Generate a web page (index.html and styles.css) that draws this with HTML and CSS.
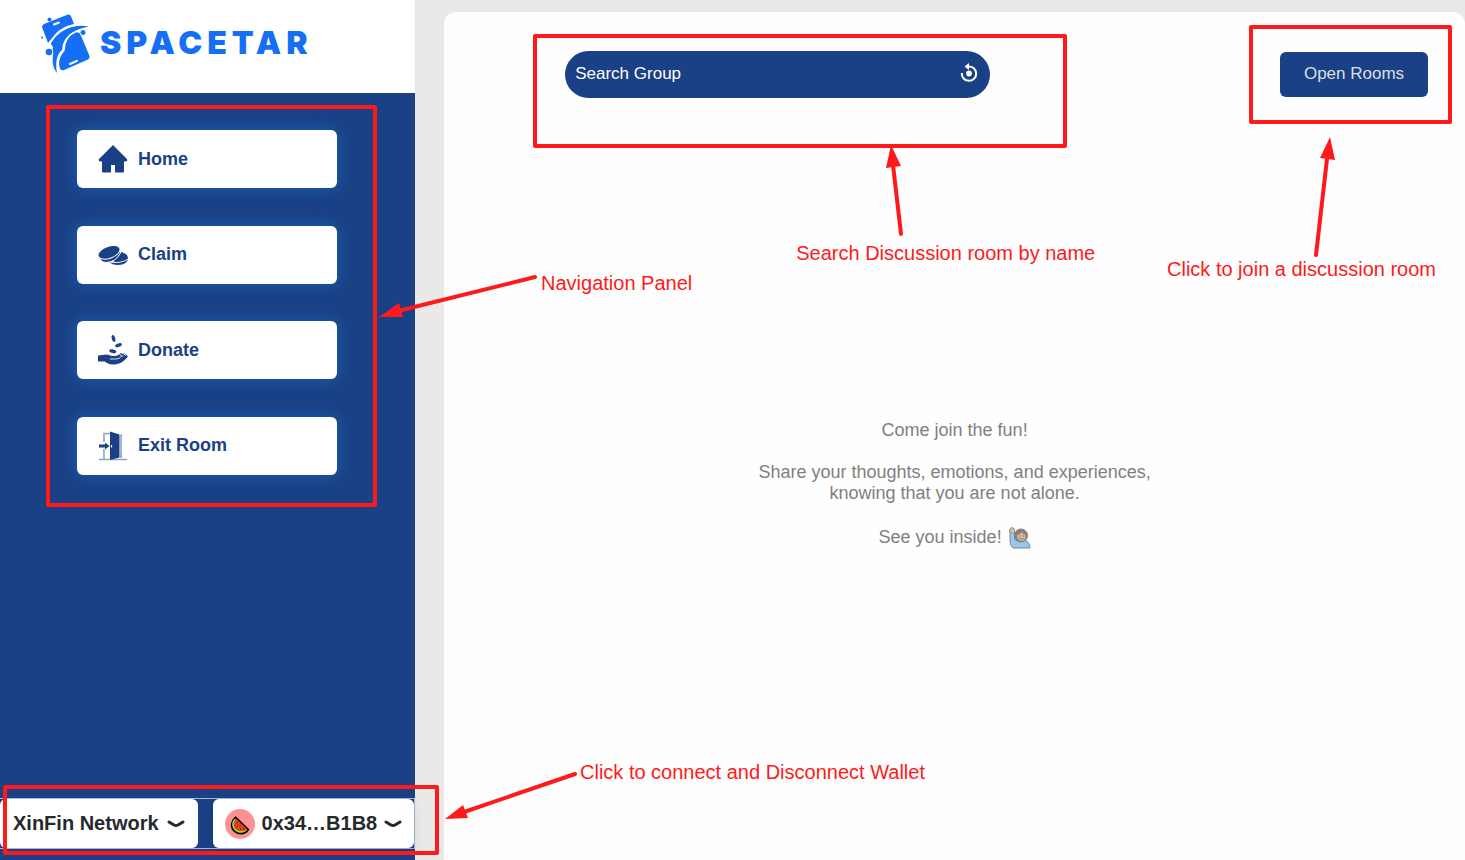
FILE: index.html
```html
<!DOCTYPE html>
<html lang="en">
<head>
<meta charset="utf-8">
<title>Spacetar</title>
<link rel="stylesheet" href="styles.css">
</head>
<body>
<div class="app">
  <aside class="sidebar">
    <a class="brand" href="#">
      <svg class="brand-mark" viewBox="0 0 52 62" aria-hidden="true">
        <g fill="#156ff5">
          <path d="M2 15Q2 13 4 12L28 2.600Q30 2 31 4L34 12C24 14 17 19 13 25L8 31Z"/>
          <path d="M35 20L40 21L49.500 44Q50 46 48 47.500L23 58.500Q20 58 19.500 55C18 47 21 43 24.500 39C25 29 29 24 35 20Z"/>
          <path d="M49 14.500C34 12 23 17 16 24C14 27 11 28 11 32L13 35C12 38 14 40 13 43C12 50 13 56 17 61C15 50 17 42 22 38C23 36 22 33 23.500 31C28 22 37 16.500 49 14.500Z"/>
          <circle cx="9" cy="40" r="3.300"/><circle cx="9.500" cy="7.500" r="2"/><circle cx="2" cy="25.500" r="1"/>
        </g>
        <g fill="none" stroke="#fff" stroke-linecap="round">
          <path d="M42 17.500C31 20 26 26 24.300 32Q25 37 22 40C17.500 45 17.500 51 18.500 58" stroke-width="1.600"/>
          <path d="M36 13C25 15 16 21 10 31" stroke-width="1.500"/>
          <path d="M14 12.500L19 10.500M30 52L37 48.800" stroke-width="2"/>
          <path d="M31 3L34.500 11M42 24L50 43" stroke-width="1" stroke-dasharray="1 2"/>
        </g>
        <circle cx="43" cy="20.500" r="3" fill="#156ff5" stroke="#fff"/>
      </svg>
      <span class="brand-name">SPACETAR</span>
    </a>

    <nav class="nav">
      <a class="nav-item" href="#">
        <svg class="icon" viewBox="0 0 30 30" aria-hidden="true"><path fill="currentColor" d="M15 1L29 15Q30 17.500 27 17.500H26V27.500Q26 28.500 25 28.500H17V21H13V28.500H5Q4 28.500 4 27.500V17.500H3Q0 17.500 1 15Z"/></svg>
        Home
      </a>
      <a class="nav-item" href="#">
        <svg class="icon" viewBox="0 0 30 30" aria-hidden="true">
          <g fill="currentColor"><ellipse cx="20.500" cy="17" rx="9.500" ry="5.500" transform="rotate(8 20.500 17)"/><path d="M11 21.500Q21 24 30 18Q30 24.500 20 25Q14 25 11 21.500Z"/></g>
          <path d="M13 22.300Q24 23.500 30 19" fill="none" stroke="#fff" stroke-width=".9"/>
          <path fill="currentColor" stroke="#fff" d="M.500 15Q2 22.500 8 22.500Q18 22 22.500 13V8Z"/>
          <ellipse cx="11" cy="12.300" rx="11.500" ry="6" transform="rotate(-20 11 12.300)" fill="currentColor" stroke="#fff"/>
        </svg>
        Claim
      </a>
      <a class="nav-item" href="#">
        <svg class="icon" viewBox="0 0 30 30" aria-hidden="true">
          <g fill="currentColor"><ellipse cx="15.500" cy="3.500" rx="1.700" ry="3.500" transform="rotate(-15 15.500 3.500)"/><ellipse cx="20.500" cy="10.200" rx="3.500" ry="1.700" transform="rotate(-22 20.500 10.200)"/><ellipse cx="14.800" cy="16.200" rx="3.600" ry="1.800" transform="rotate(12 14.800 16.200)"/>
          <path d="M0 20.500L9 19.500L14 21L19 20.800L22 18.500L25 18L28 19.500L30 21.500Q25 28 19 29Q14 30.500 9 28L7 26.500H0Z"/></g>
          <path d="M12 24H18Q22 24 24 20.500M21 19L25 21.500M24 18L28 20.500" fill="none" stroke="#fff" stroke-width=".8"/>
        </svg>
        Donate
      </a>
      <a class="nav-item" href="#">
        <svg class="icon" viewBox="0 0 30 30" aria-hidden="true">
          <path d="M6 11V2.500H12M6 18V28M23 4V27M1 28.500H29" fill="none" stroke="#8ea3c8" stroke-width="1.600"/>
          <path d="M22 4H24.500M22 25H24.500" stroke="#8ea3c8"/>
          <path fill="currentColor" d="M12 .500L21.500 3.500V26.500L12 29ZM1 13.500H7V11.500L11.500 15L7 18.500V16.500H1Z"/>
          <path d="M13.500 14V16.500" stroke="#fff" stroke-width="1.200"/>
        </svg>
        Exit Room
      </a>
      <div class="frame frame-nav"></div>
      <div class="note note-nav">
        <svg class="arrow-nav" viewBox="0 0 160 46" aria-hidden="true"><path class="shaft" d="M157 3L20 37"/><path class="head" d="M1 43L21 29L25 43Z"/></svg>
        <span>Navigation Panel</span>
      </div>
    </nav>

    <div class="wallet">
      <button class="wallet-btn network" type="button">XinFin Network
        <svg class="chevron" viewBox="0 0 18 10" aria-hidden="true"><path d="M2 3L7 6Q9 7.200 11 6L16 3"/></svg>
      </button>
      <button class="wallet-btn account" type="button">
        <svg class="avatar" viewBox="0 0 30 30" aria-hidden="true">
          <circle cx="15" cy="15" r="15" fill="#ff9195"/>
          <path d="M10.500 8L23.500 20.500C20 26 13 26 9 22C5 18 6 12 10.500 8Z" fill="#2f7d1c" stroke="#0a0d06" stroke-width="1.400" stroke-linejoin="round"/>
          <path d="M9.700 10.500C7.500 14 7.500 18 10.500 20.800C13.500 23.500 18 23.500 21.200 21" fill="none" stroke="#b4d832" stroke-width="1.500"/>
          <path d="M10.800 9.800L21.800 20.400C18 22.700 14 22.500 11.300 19.800C8.600 17 8.800 13 10.800 9.800Z" fill="#f23c1d"/>
          <path d="M12 13v1.200M15 16v1.200M12 17v1.200M15.500 19.500v1.200M18.500 19v1.200" stroke="#5c120c" stroke-width="1"/>
        </svg>
        0x34…B1B8
        <svg class="chevron" viewBox="0 0 18 10" aria-hidden="true"><path d="M2 3L7 6Q9 7.200 11 6L16 3"/></svg>
      </button>
      <div class="frame frame-wallet"></div>
      <div class="note note-wallet">
        <svg class="arrow-wallet" viewBox="0 0 134 50" aria-hidden="true"><path class="shaft" d="M131 3L20 41"/><path class="head" d="M1 48L19 34L24 47Z"/></svg>
        <span>Click to connect and Disconnect Wallet</span>
      </div>
    </div>
  </aside>

  <main class="main">
    <header class="toolbar">
      <form class="search">
        <input class="search-input" type="text" placeholder="Search Group" aria-label="Search Group">
        <button class="search-reset" type="button" aria-label="Reset search">
          <svg viewBox="0 0 20 20" aria-hidden="true"><path d="M9 3.500A7.200 7.200 0 1 1 2.800 10" fill="none" stroke="#fff" stroke-width="2"/><path d="M10 0V7L5.500 3.500Z" fill="#fff"/><circle cx="10" cy="10.500" r="2.900" fill="#fff"/></svg>
        </button>
        <div class="frame frame-search"></div>
        <div class="note note-search">
          <svg class="arrow-search" viewBox="0 0 20 92" aria-hidden="true"><path class="shaft" d="M15 89L7 20"/><path class="head" d="M5 0L15 21L0 23Z"/></svg>
          <span>Search Discussion room by name</span>
        </div>
      </form>
      <div class="rooms">
        <button class="rooms-btn" type="button">Open Rooms</button>
        <div class="frame frame-rooms"></div>
        <div class="note note-rooms">
          <svg class="arrow-rooms" viewBox="0 0 24 120" aria-hidden="true"><path class="shaft" d="M5 118L16 22"/><path class="head" d="M19 0L24 23L9 21Z"/></svg>
          <span>Click to join a discussion room</span>
        </div>
      </div>
    </header>
    <section class="welcome">
      <p>Come join the fun!</p>
      <p>Share your thoughts, emotions, and experiences,<br>knowing that you are not alone.</p>
      <p class="farewell">See you inside!
        <svg class="wave" viewBox="0 0 22 22" role="img" aria-label="Person raising hand">
          <path d="M1 6Q0 2 2 1Q5 0 5.500 3L6 13L14 13Q21 14 21 21H4Q1 19 1 12Z" fill="#96c8ed" stroke="#85868a"/>
          <path d="M1 6Q0 2 2 1Q5 0 5.500 3V6Z" fill="#d6bfa6" stroke="#96918b" stroke-width=".8"/>
          <circle cx="12" cy="8.500" r="6.500" fill="#8b7d7b" stroke="#817b7b"/>
          <path d="M8 8Q11 8 13 5Q14 7 16.500 8Q17 14 12.500 14Q8 14 8 8Z" fill="#d3b8a0"/>
          <path d="M10.300 8.500v1M14.300 8.500v1M10.500 11.500Q12.500 13 14.500 11.500" fill="none" stroke="#7d6964" stroke-width=".9"/>
        </svg>
      </p>
    </section>
  </main>
</div>
</body>
</html>
```
FILE: styles.css
```css
* {
  box-sizing: border-box;
}

body {
  margin: 0;
  background: #eae9e7;
  color: #1a4185;
  font-family: "Liberation Sans", Arial, sans-serif;
}

button,
input {
  border: 0;
  font: inherit;
}

p {
  margin: 0;
}

.app {
  display: flex;
  gap: 29px;
  min-height: 100vh;
  overflow: hidden;
}

.sidebar {
  display: flex;
  flex: 0 0 415px;
  flex-direction: column;
  background: #1a4185;
  z-index: 1;
}

.brand {
  display: flex;
  align-items: center;
  gap: 8px;
  padding: 12px 40px 19px;
  background: #fff;
  color: #156ff5;
  text-decoration: none;
}

.brand-mark {
  width: 52px;
  height: 62px;
}

.brand-name {
  font-family: Inter, sans-serif;
  font-size: 32px;
  font-weight: 900;
  letter-spacing: 5px;
  line-height: 40px;
}

.nav {
  position: relative;
  display: flex;
  flex-direction: column;
  justify-content: space-between;
  min-height: 414px;
  padding: 37px 78px 32px 77px;
}

.nav-item {
  display: flex;
  align-items: center;
  gap: 10px;
  height: 58px;
  padding: 0 21px;
  border-radius: 6px;
  background: #fff;
  box-shadow: 0 0 16px #1e62b4;
  color: #1a4185;
  font-size: 18px;
  font-weight: 700;
  text-decoration: none;
}

.icon {
  width: 30px;
  height: 30px;
}

.wallet {
  position: relative;
  display: flex;
  gap: 15px;
  margin: auto 0 11px;
  border: 1px solid #a9b8d3;
  border-left: 0;
}

.wallet-btn {
  display: flex;
  align-items: center;
  height: 49px;
  border-radius: 6px;
  background: #fff;
  color: #25292e;
  font-size: 20px;
  font-weight: 700;
  white-space: nowrap;
}

.network {
  flex: 0 0 197px;
  gap: 8px;
  padding: 0 13px;
}

.account {
  flex: 1;
  gap: 7px;
  padding: 0 12px;
  box-shadow: 0 4px 12px rgba(0, 0, 0, 0.1);
}

.avatar {
  width: 30px;
  height: 30px;
}

.chevron {
  width: 18px;
  height: 10px;
  fill: none;
  stroke: #25292e;
  stroke-width: 3;
  stroke-linecap: round;
}

.main {
  display: flex;
  flex: 1;
  flex-direction: column;
  min-width: 0;
  margin-top: 12px;
  border-radius: 12px 12px 0 0;
  background: #fefefe;
}

.toolbar {
  display: flex;
  justify-content: space-between;
  align-items: center;
  gap: 40px;
  padding: 39px 37px 12px 121px;
}

.search {
  position: relative;
  display: flex;
  align-items: center;
  flex: 0 1 425px;
  height: 47px;
  padding: 0 11px 0 10px;
  border-radius: 24px;
  background: #1a4185;
}

.search-input {
  flex: 1;
  min-width: 0;
  padding: 0 0 2px;
  outline: 0;
  background: transparent;
  color: #fff;
  font-size: 17px;
}

.search-input::placeholder {
  color: #fff;
  opacity: 1;
}

.search-reset {
  width: 20px;
  padding: 0 0 4px;
  background: transparent;
}

.search-reset svg {
  display: block;
  width: 20px;
  height: 20px;
}

.rooms {
  position: relative;
}

.rooms-btn {
  display: block;
  width: 148px;
  height: 45px;
  padding: 0 0 2px;
  border-radius: 6px;
  background: #1a4185;
  color: #dedfe2;
  font-size: 17px;
}

.welcome {
  display: flex;
  flex: 1;
  flex-direction: column;
  justify-content: center;
  gap: 21px;
  color: #808080;
  font-size: 18px;
  line-height: 21px;
  text-align: center;
}

.farewell {
  display: flex;
  align-items: center;
  justify-content: center;
  gap: 7px;
  height: 26px;
}

.wave {
  width: 22px;
  height: 22px;
}

/* Tutorial callouts drawn over the interface */
.frame {
  position: absolute;
  border: 4px solid #fe1a1a;
  border-radius: 2px;
  pointer-events: none;
}

.frame-nav {
  inset: 12px 38px 0 46px;
}

.frame-wallet {
  inset: -14px -25px -7px 3px;
}

.frame-search {
  inset: -17px -77px -50px -32px;
}

.frame-rooms {
  inset: -27px -24px -27px -31px;
}

.note {
  position: absolute;
  display: flex;
  align-items: flex-start;
  color: #fe1a1a;
  font-size: 20px;
  line-height: 24px;
  white-space: nowrap;
  pointer-events: none;
}

.note svg {
  flex: none;
  overflow: visible;
}

.shaft {
  fill: none;
  stroke: #fe1a1a;
  stroke-width: 4;
  stroke-linecap: round;
}

.head {
  fill: #fe1a1a;
}

.note-nav {
  top: 178px;
  left: 378px;
  gap: 3px;
}

.arrow-nav {
  width: 160px;
  height: 46px;
  margin-top: 3px;
}

.note-wallet {
  bottom: 27px;
  left: 444px;
  gap: 2px;
}

.arrow-wallet {
  width: 134px;
  height: 50px;
  margin-top: 11px;
}

.note-search {
  top: 94px;
  left: 231px;
  flex-direction: column;
  gap: 4px;
}

.arrow-search {
  width: 20px;
  height: 92px;
  margin-left: 90px;
}

.note-rooms {
  top: 85px;
  right: -8px;
  flex-direction: column;
}

.arrow-rooms {
  width: 24px;
  height: 120px;
  margin-left: 144px;
}
```
